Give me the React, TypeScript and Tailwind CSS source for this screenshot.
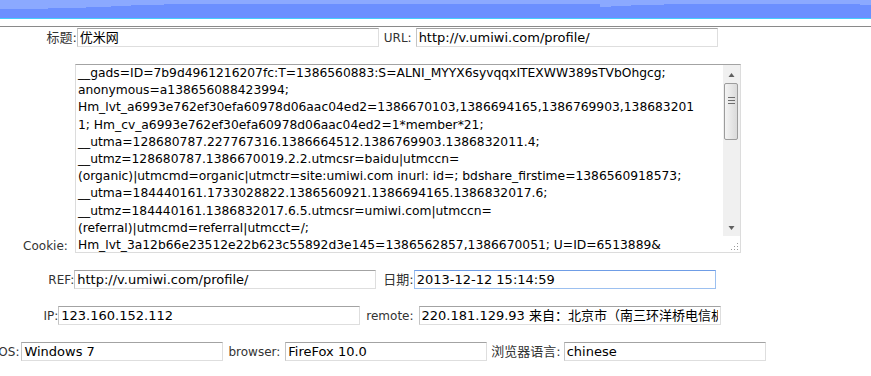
import type { ReactNode } from 'react'

const cookieLines = [
  '__gads=ID=7b9d4961216207fc:T=1386560883:S=ALNI_MYYX6syvqqxITEXWW389sTVbOhgcg;',
  'anonymous=a138656088423994;',
  'Hm_lvt_a6993e762ef30efa60978d06aac04ed2=1386670103,1386694165,1386769903,138683201',
  '1; Hm_cv_a6993e762ef30efa60978d06aac04ed2=1*member*21;',
  '__utma=128680787.227767316.1386664512.1386769903.1386832011.4;',
  '__utmz=128680787.1386670019.2.2.utmcsr=baidu|utmccn=',
  '(organic)|utmcmd=organic|utmctr=site:umiwi.com inurl: id=; bdshare_firstime=1386560918573;',
  '__utma=184440161.1733028822.1386560921.1386694165.1386832017.6;',
  '__utmz=184440161.1386832017.6.5.utmcsr=umiwi.com|utmccn=',
  '(referral)|utmcmd=referral|utmcct=/;',
  'Hm_lvt_3a12b66e23512e22b623c55892d3e145=1386562857,1386670051; U=ID=6513889&',
]

function Label({ children, className = '', cjk = false }: { children: ReactNode; className?: string; cjk?: boolean }) {
  return (
    <span className={`whitespace-nowrap text-[#333] ${cjk ? 'text-[13px]' : 'text-[12px]'} ${className}`}>
      {children}
    </span>
  )
}

function TextBox({ value, focused = false, narrow = false }: { value: string; focused?: boolean; narrow?: boolean }) {
  const width = narrow ? 'w-[202px]' : 'w-[302px]'
  return (
    <input
      readOnly
      value={value}
      className={
        focused
          ? `h-[19px] ${width} shrink-0 border border-[#9cc0f0] border-t-[#6f9de6] bg-white px-[2px] text-[13px] text-black outline-none`
          : `h-[19px] ${width} shrink-0 border border-[#dedede] border-t-[#a3a3a3] border-l-[#c4c4c4] bg-white px-[2px] text-[13px] text-black outline-none`
      }
    />
  )
}

function Scrollbar() {
  return (
    <div className="flex w-[17px] shrink-0 flex-col">
      <div className="flex flex-1 flex-col items-center bg-[#f0f0f0] px-[2px]">
        <svg width="7" height="17" viewBox="0 0 7 17">
          <path d="M0.5 12 L3.5 8 L6.5 12 Z" fill="#606060" />
        </svg>
        <div className="mt-[1px] flex h-[57px] w-[14px] items-start justify-center rounded-[2px] border border-[#9c9c9c] bg-gradient-to-r from-[#f4f4f4] to-[#dadada] pt-[13px]">
          <div className="flex flex-col gap-[2px]">
            <div className="h-px w-[7px] bg-[#6d6d6d]" />
            <div className="h-px w-[7px] bg-[#6d6d6d]" />
            <div className="h-px w-[7px] bg-[#6d6d6d]" />
          </div>
        </div>
        <div className="flex-1" />
        <svg width="7" height="14" viewBox="0 0 7 14">
          <path d="M0.5 4 L6.5 4 L3.5 8 Z" fill="#606060" />
        </svg>
      </div>
      <div className="flex h-[16px] items-end justify-end bg-white pb-[1px] pr-[1px]">
        <svg width="8" height="8" viewBox="0 0 8 8" fill="#9a9a9a">
          <rect x="6" y="0" width="1" height="1" />
          <rect x="3" y="3" width="1" height="1" />
          <rect x="6" y="3" width="1" height="1" />
          <rect x="0" y="6" width="1" height="1" />
          <rect x="3" y="6" width="1" height="1" />
          <rect x="6" y="6" width="1" height="1" />
        </svg>
      </div>
    </div>
  )
}

export default function App() {
  return (
    <div className="h-[376px] w-[871px] overflow-hidden bg-white font-['DejaVu_Sans','Noto_Sans_CJK_SC',sans-serif]">
      <div className="flex h-[19px] flex-col">
        <svg className="h-[18px] w-full" viewBox="0 0 871 18" preserveAspectRatio="none">
          <rect x="0" y="0" width="871" height="18" fill="#6b8fff" />
          <path
            d="M0 0 H871 V5 H860 V4 H664 V5 H631 V6 H611 V7 H600 V4 H164 V5 H131 V6 H111 V7 H86 V8 H48 V9 H0 Z"
            fill="#8ba9ff"
          />
        </svg>
        <div className="h-px bg-[#46cdfc]" />
      </div>
      <div className="mt-[7px] h-px bg-[#8a8a8a]" />

      <div className="flex w-[764px] flex-col pt-[1px]">
        <div className="flex h-[19px] items-center justify-center">
          <Label cjk>标题:</Label>
          <TextBox value="优米网" />
          <Label className="ml-[5px] mr-[4px]">URL:</Label>
          <TextBox value="http://v.umiwi.com/profile/" />
        </div>

        <div className="mt-[17px] flex items-end justify-center">
          <Label className="mb-[-2px] mr-[7px]">Cookie:</Label>
          <div className="flex h-[189px] w-[666px] border border-[#dcdcdc] border-t-[#a3a3a3] bg-white">
            <div className="flex-1 overflow-hidden whitespace-pre pl-[2px] text-[12.3px] leading-[17.2px] text-black">
              {cookieLines.map((line, i) => (
                <div key={i}>{line}</div>
              ))}
            </div>
            <Scrollbar />
          </div>
        </div>

        <div className="mt-[17px] flex h-[19px] items-center justify-center">
          <Label>REF:</Label>
          <TextBox value="http://v.umiwi.com/profile/" />
          <Label cjk className="ml-[7px]">日期:</Label>
          <TextBox value="2013-12-12 15:14:59" focused />
        </div>

        <div className="mt-[17px] flex h-[19px] items-center justify-center">
          <Label>IP:</Label>
          <TextBox value="123.160.152.112" />
          <Label className="ml-[6px] mr-[5px]">remote:</Label>
          <TextBox value="220.181.129.93 来自：北京市（南三环洋桥电信机房）电信" />
        </div>

        <div className="mt-[17px] flex h-[19px] items-center justify-center">
          <Label className="mr-[2px]">OS:</Label>
          <TextBox value="Windows 7" narrow />
          <Label className="ml-[5px] mr-[5px]">browser:</Label>
          <TextBox value="FireFox 10.0" narrow />
          <Label cjk className="ml-[4px] mr-[3px]">浏览器语言:</Label>
          <TextBox value="chinese" narrow />
        </div>
      </div>
    </div>
  )
}
